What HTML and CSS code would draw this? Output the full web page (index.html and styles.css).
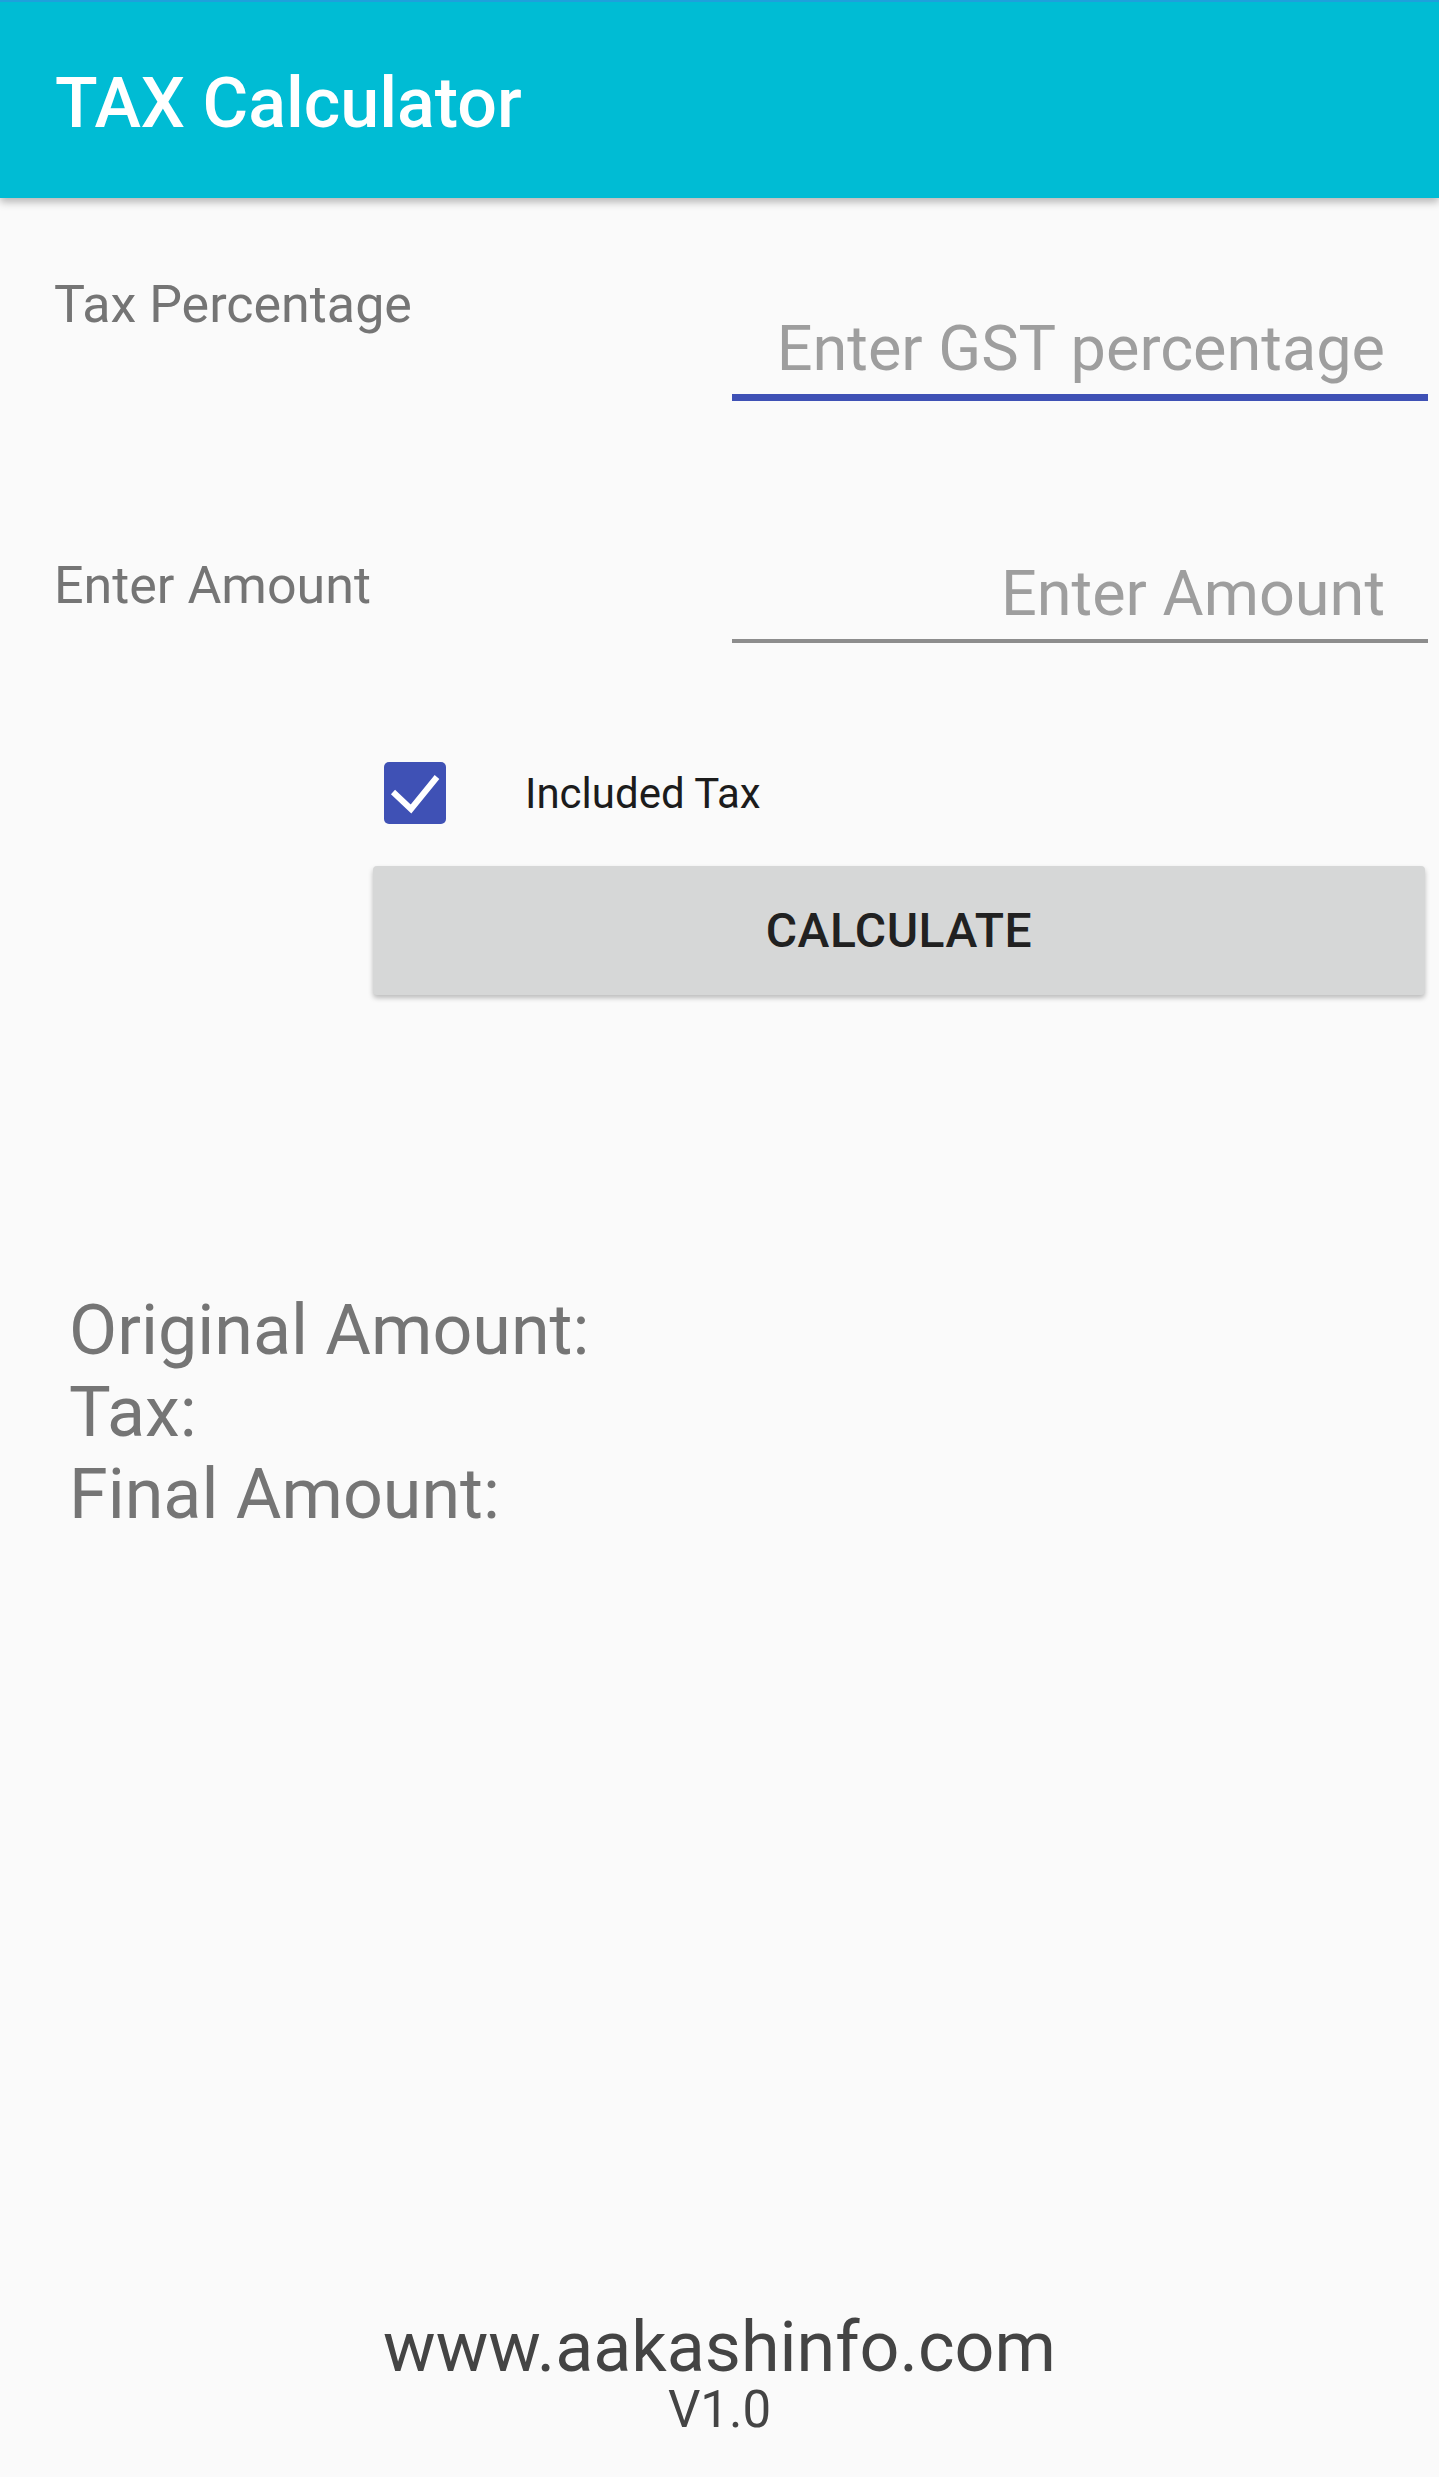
FILE: index.html
```html
<!DOCTYPE html>
<html>
<head>
	<title>TAX Calculator</title>
	<link rel="stylesheet" href="styles.css">
</head>
<body>
	<header class="appbar">
		<h1 class="title">TAX Calculator</h1>
	</header>

	<main class="form">
		<div class="field-row first">
			<label class="field-label">Tax Percentage</label>
			<input class="field-input focused" type="text" placeholder="Enter GST percentage">
		</div>
		<div class="field-row second">
			<label class="field-label">Enter Amount</label>
			<input class="field-input" type="text" placeholder="Enter Amount">
		</div>

		<div class="check-row">
			<span class="check-box">
				<svg width="62" height="62" viewBox="0 0 62 62">
					<rect x="0" y="0" width="62" height="62" rx="5" fill="#3f51b5"/>
					<polyline points="9,30 27,47 53,15" fill="none" stroke="#fff" stroke-width="6"/>
				</svg>
			</span>
			<span class="check-text">Included Tax</span>
		</div>

		<button class="calc-btn">CALCULATE</button>

		<div class="results">
			<p>Original Amount:</p>
			<p>Tax:</p>
			<p>Final Amount:</p>
		</div>
	</main>

	<footer class="footer">
		<p class="site">www.aakashinfo.com</p>
		<p class="version">V1.0</p>
	</footer>
</body>
</html>
```

FILE: styles.css
```css
html, body {
	margin: 0;
	padding: 0;
}
body {
	height: 2477px;
	overflow: hidden;
	background-color: #fafafa;
	font-family: Roboto, "Noto Sans", sans-serif;
	display: flex;
	flex-direction: column;
}

.appbar {
	height: 198px;
	box-sizing: border-box;
	border-top: 2px solid #1ea0dc;
	padding: 61px 0 0 55px;
	background-color: #00bcd4;
	box-shadow: 0 4px 8px rgba(0, 0, 0, 0.28);
	position: relative;
	z-index: 1;
}
.title {
	margin: 0;
	font-size: 70px;
	line-height: 80px;
	font-weight: 500;
	color: #fff;
}

.form {
	padding: 78px 11px 0 54px;
}
.field-row {
	display: flex;
	align-items: flex-start;
}
.field-row.second {
	margin-top: 152px;
}
.field-label {
	flex: 1;
	font-size: 52px;
	line-height: 58px;
	color: #757575;
}
.field-row.second .field-label {
	margin-top: 4px;
}
.field-row.first .field-input {
	margin-top: 32px;
}
.field-input {
	width: 696px;
	height: 90px;
	box-sizing: border-box;
	padding: 0 43px 6px 0;
	border: none;
	border-bottom: 4px solid #8d8d8d;
	background: transparent;
	outline: none;
	font-family: Roboto, sans-serif;
	font-size: 63px;
	line-height: 80px;
	text-align: right;
	color: #212121;
}
.field-input.focused {
	height: 93px;
	border-bottom: 7px solid #3f51b5;
}
.field-input::placeholder {
	color: #9e9e9e;
}

.check-row {
	display: flex;
	align-items: center;
	margin: 119px 0 0 330px;
	height: 62px;
}
.check-box {
	display: block;
	width: 62px;
	height: 62px;
}
.check-box svg {
	display: block;
}
.check-text {
	margin-left: 79px;
	font-size: 42px;
	color: #1c1c1c;
}

.calc-btn {
	display: block;
	width: 1052px;
	height: 129px;
	margin: 42px 0 0 319px;
	border: none;
	border-radius: 4px;
	background-color: #d6d7d7;
	box-shadow: 0 3px 5px rgba(0, 0, 0, 0.25);
	font-family: Roboto, sans-serif;
	font-size: 48px;
	font-weight: 500;
	color: #212121;
	letter-spacing: 0.5px;
}

.results {
	margin-top: 294px;
	padding-left: 15px;
}
.results p {
	margin: 0;
	font-size: 70px;
	line-height: 82px;
	color: #757575;
}

.footer {
	margin-top: auto;
	padding-bottom: 40px;
	text-align: center;
}
.footer p {
	margin: 0;
}
.site {
	font-size: 70px;
	line-height: 72px;
	color: #444;
}
.version {
	font-size: 51px;
	line-height: 54px;
	color: #444;
}
```
